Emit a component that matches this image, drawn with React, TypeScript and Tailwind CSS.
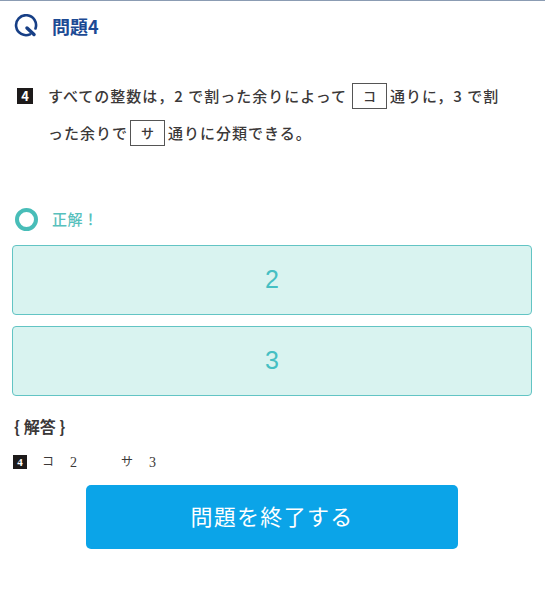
import React from "react";

const jp = "font-['Noto_Sans_CJK_JP','Noto_Sans',sans-serif]";
const mincho = "font-['Liberation_Serif','Noto_Sans_CJK_JP',serif]";

const NumberMark = ({ small }: { small?: boolean }) => (
  <span
    className={`flex items-center justify-center bg-[#1d1a1a] text-white font-bold shrink-0 ${
      small ? "w-[14px] h-[14px] text-[11px]" : "w-[16px] h-[16px] text-[13px]"
    }`}
  >
    4
  </span>
);

const Blank = ({ label, className }: { label: string; className: string }) => (
  <span className={`inline-flex items-center justify-center w-[35px] h-[26px] border border-[#555] text-[13px] font-medium shrink-0 ${className}`}>
    {label}
  </span>
);

const AnswerBox = ({ value }: { value: string }) => (
  <div className="h-[70px] rounded-[4px] border-[1.5px] border-[#62c4c4] bg-[#d9f3f0] flex items-center justify-center text-[25px] text-[#45bfc3] font-['Liberation_Sans',sans-serif]">
    {value}
  </div>
);

export default function App() {
  return (
    <div className={`w-[545px] h-[600px] bg-white overflow-hidden ${jp}`}>
      <div className="h-px bg-[#8b9cb3]" />
      <header className="flex items-center pl-[14px] h-[50px] gap-[14px]">
        <svg width="24" height="24" viewBox="0 0 24 24" fill="none" className="shrink-0">
          <path
            d="M16 20.4A10 10 0 1 1 21.5 14.5"
            stroke="#173f86"
            strokeWidth="2.6"
            strokeLinecap="round"
          />
          <path d="M13 14L20 20.5" stroke="#173f86" strokeWidth="3.5" strokeLinecap="round" />
        </svg>
        <h1 className="text-[18px] font-bold text-[#1c4a94] leading-none">問題4</h1>
      </header>

      <section className="mt-[30px] pl-[17px] text-[15px] font-medium text-[#3b3838]">
        <div className="flex items-center h-[30px]">
          <NumberMark />
          <span className="ml-[15px] tracking-[1px] whitespace-nowrap">すべての整数は，2 で割った余りによって</span>
          <Blank label="コ" className="ml-[5px] mr-[3px]" />
          <span className="tracking-[1px] whitespace-nowrap">通りに，3 で割</span>
        </div>
        <div className="flex items-center h-[30px] mt-[7px] pl-[31px]">
          <span className="tracking-[1px] whitespace-nowrap">った余りで</span>
          <Blank label="サ" className="ml-[2px] mr-[3px]" />
          <span className="tracking-[1px] whitespace-nowrap">通りに分類できる。</span>
        </div>
      </section>

      <div className="flex items-center mt-[59px] pl-[15px] h-[24px] gap-[14px]">
        <span className="w-[23px] h-[23px] rounded-full border-[4px] border-[#48bdb8]" />
        <span className="text-[15px] font-medium text-[#57c0bc] tracking-[0.5px]">正解！</span>
      </div>

      <div className="flex flex-col gap-[11px] ml-[12px] mr-[13px] mt-[14px]">
        <AnswerBox value="2" />
        <AnswerBox value="3" />
      </div>

      <div className="pl-[14px] mt-[19px] text-[16px] font-bold text-[#3b3838] leading-[22px] whitespace-pre">{"{ 解答 }"}</div>

      <div className={`flex items-center pl-[13px] mt-[17px] h-[16px] text-[14px] text-[#3b3838] ${mincho}`}>
        <NumberMark small />
        <span className="ml-[15px] text-[12px]">コ</span>
        <span className="ml-[16px]">2</span>
        <span className="ml-[44px] text-[12px]">サ</span>
        <span className="ml-[16px]">3</span>
      </div>

      <button className="block mt-[15px] w-[372px] h-[64px] ml-[86px] pb-[3px] rounded-[5px] bg-[#0ba4e8] text-white text-[22px] tracking-[1.3px]">
        問題を終了する
      </button>
    </div>
  );
}
